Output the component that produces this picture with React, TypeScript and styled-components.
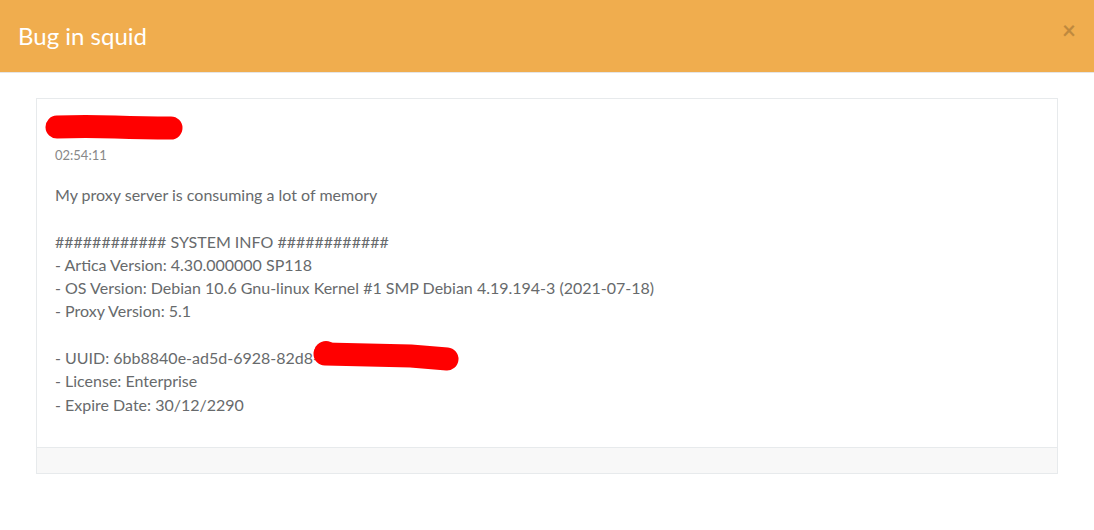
import React from 'react';
import styled, { createGlobalStyle } from 'styled-components';

const GlobalStyle = createGlobalStyle`
  html, body {
    margin: 0;
    padding: 0;
    background: #ffffff;
    font-family: Lato, "Open Sans", sans-serif;
  }
`;

const Header = styled.header`
  display: flex;
  align-items: center;
  justify-content: space-between;
  height: 72px;
  padding: 0 18px;
  background-color: #f0ad4e;
  border-bottom: 1px solid #e5e5e5;
`;

const Title = styled.h4`
  margin: -2px 0 0 0;
  font-size: 24px;
  font-weight: 400;
  color: #ffffff;
`;

const Close = styled.button`
  border: 0;
  background: none;
  padding: 0;
  margin-top: -12px;
  font-family: Lato, sans-serif;
  font-size: 24px;
  font-weight: 700;
  line-height: 1;
  color: #000;
  opacity: 0.2;
  cursor: pointer;
`;

const Body = styled.main`
  padding: 25px 36px;
`;

const Panel = styled.section`
  border: 1px solid #e7eaec;
`;

const PanelContent = styled.div`
  padding: 16px 18px 31px 18px;
`;

const Author = styled.div`
  height: 26px;
  margin-left: -10px;
`;

const Time = styled.div`
  margin-top: 6px;
  font-size: 13px;
  color: #888888;
`;

const Message = styled.div`
  margin-top: 20px;
  font-size: 16px;
  line-height: 23.3px;
  color: #676a6c;
`;

const Line = styled.div`
  height: 23.3px;
  white-space: nowrap;
`;

const Scribble = styled.svg`
  vertical-align: middle;
  margin-left: -8px;
  margin-top: -6px;
`;

const PanelFooter = styled.div`
  height: 25px;
  background: #f8f8f8;
  border-top: 1px solid #e7eaec;
`;

const lines = [
  'My proxy server is consuming a lot of memory',
  '',
  '############ SYSTEM INFO ############',
  '- Artica Version: 4.30.000000 SP118',
  '- OS Version: Debian 10.6 Gnu-linux Kernel #1 SMP Debian 4.19.194-3 (2021-07-18)',
  '- Proxy Version: 5.1',
  '',
];

export default function App() {
  return (
    <>
      <GlobalStyle />
      <Header>
        <Title>Bug in squid</Title>
        <Close aria-label="Close">×</Close>
      </Header>
      <Body>
        <Panel>
          <PanelContent>
            <Author>
              <svg width="140" height="26" viewBox="0 0 140 26">
                <path d="M12 12 Q40 11 70 12 T126 13" stroke="#ff0000" strokeWidth="23" strokeLinecap="round" fill="none" />
              </svg>
            </Author>
            <Time>02:54:11</Time>
            <Message>
              {lines.map((l, i) => (
                <Line key={i}>{l}</Line>
              ))}
              <Line>
                - UUID: 6bb8840e-ad5d-6928-82d8-
                <Scribble width="150" height="34" viewBox="0 0 150 34">
                  <path d="M14 14 Q60 15 100 16 L136 19" stroke="#ff0000" strokeWidth="23" strokeLinecap="round" fill="none" />
                  <circle cx="15" cy="13" r="12" fill="#ff0000" />
                </Scribble>
              </Line>
              <Line>- License: Enterprise</Line>
              <Line>- Expire Date: 30/12/2290</Line>
            </Message>
          </PanelContent>
          <PanelFooter />
        </Panel>
      </Body>
    </>
  );
}
